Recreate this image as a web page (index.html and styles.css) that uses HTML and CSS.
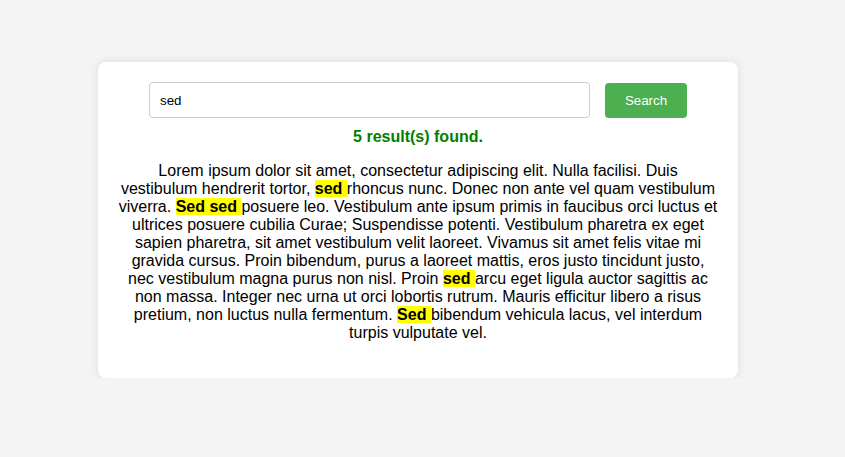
FILE: index.html
```html
<!DOCTYPE html>
<html>
<head>
<meta charset="utf-8">
<link rel="stylesheet" href="styles.css">
</head>
<body>
<div class="card">
  <div class="search-row">
    <input class="search-input" type="text" value="sed">
    <button class="search-btn">Search</button>
  </div>
  <div class="result">5 result(s) found.</div>
  <p class="text">Lorem ipsum dolor sit amet, consectetur adipiscing elit. Nulla facilisi. Duis vestibulum hendrerit tortor, <span class="hl">sed </span>rhoncus nunc. Donec non ante vel quam vestibulum viverra. <span class="hl">Sed sed </span>posuere leo. Vestibulum ante ipsum primis in faucibus orci luctus et ultrices posuere cubilia Curae; Suspendisse potenti. Vestibulum pharetra ex eget sapien pharetra, sit amet vestibulum velit laoreet. Vivamus sit amet felis vitae mi gravida cursus. Proin bibendum, purus a laoreet mattis, eros justo tincidunt justo, nec vestibulum magna purus non nisl. Proin <span class="hl">sed </span>arcu eget ligula auctor sagittis ac non massa. Integer nec urna ut orci lobortis rutrum. Mauris efficitur libero a risus pretium, non luctus nulla fermentum. <span class="hl">Sed </span>bibendum vehicula lacus, vel interdum turpis vulputate vel.</p>
</div>
</body>
</html>
```

FILE: styles.css
```css
html, body {
  margin: 0;
  padding: 0;
  background: #f4f4f4;
  font-family: "Liberation Sans", Arial, sans-serif;
}
.card {
  box-sizing: border-box;
  width: 640px;
  margin: 62px 0 0 98px;
  padding: 20px;
  background: #fff;
  border-radius: 8px;
  box-shadow: 0 0 10px rgba(0, 0, 0, 0.1);
}
.search-row {
  display: flex;
  justify-content: center;
  align-items: center;
  gap: 15px;
}
.search-input {
  box-sizing: border-box;
  width: 441px;
  height: 36px;
  padding: 0 10px;
  border: 1px solid #ccc;
  border-radius: 4px;
  font-family: "Liberation Sans", Arial, sans-serif;
  font-size: 13.33px;
  color: #000;
  outline: none;
}
.search-btn {
  box-sizing: border-box;
  width: 82px;
  height: 35px;
  padding: 0;
  border: none;
  border-radius: 4px;
  background: #4caf50;
  color: #fff;
  font-family: "Liberation Sans", Arial, sans-serif;
  font-size: 13.33px;
}
.result {
  margin-top: 10px;
  text-align: center;
  font-weight: bold;
  font-size: 16px;
  line-height: 18px;
  color: #008000;
}
.text {
  margin: 16px 0;
  text-align: center;
  font-size: 16px;
  line-height: 18px;
  color: #000;
}
.hl {
  background: #ffff00;
  font-weight: bold;
}
```
